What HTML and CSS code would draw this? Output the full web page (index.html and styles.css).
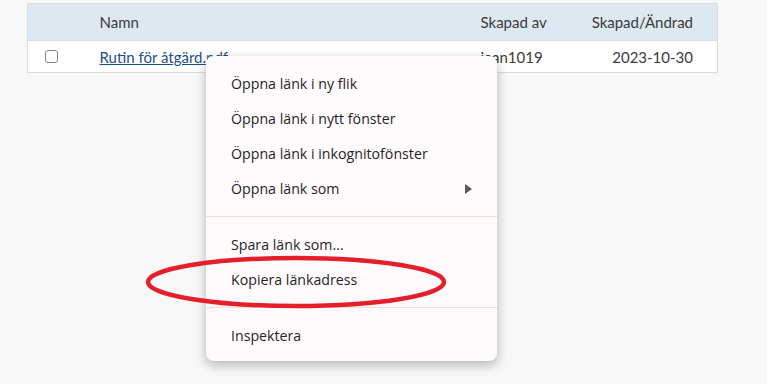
FILE: index.html
```html
<!DOCTYPE html>
<html lang="sv">
<head>
    <meta charset="UTF-8">
    <title>Dokument</title>
    <link rel="stylesheet" href="styles.css">
</head>
<body>
    <div class="page">
        <table class="doc-table">
            <thead>
                <tr>
                    <th class="col-check"></th>
                    <th class="col-name">Namn</th>
                    <th class="col-by">Skapad av</th>
                    <th class="col-date">Skapad/Ändrad</th>
                </tr>
            </thead>
            <tbody>
                <tr>
                    <td class="col-check"><span class="checkbox"></span></td>
                    <td class="col-name"><a href="#">Rutin för åtgärd.pdf</a></td>
                    <td class="col-by">jean1019</td>
                    <td class="col-date">2023-10-30</td>
                </tr>
            </tbody>
        </table>

        <div class="context-menu">
            <div class="menu-group">
                <div class="menu-item">Öppna länk i ny flik</div>
                <div class="menu-item">Öppna länk i nytt fönster</div>
                <div class="menu-item">Öppna länk i inkognitofönster</div>
                <div class="menu-item has-sub">Öppna länk som <span class="arrow"></span></div>
            </div>
            <div class="menu-group">
                <div class="menu-item">Spara länk som...</div>
                <div class="menu-item">Kopiera länkadress</div>
            </div>
            <div class="menu-group">
                <div class="menu-item">Inspektera</div>
            </div>
        </div>

        <svg class="mark" width="306" height="60" viewBox="0 0 306 60">
            <ellipse cx="151" cy="30" rx="148" ry="24" fill="none" stroke="#e41e2b" stroke-width="4.5"/>
        </svg>
    </div>
</body>
</html>
```

FILE: styles.css
```css
* {
    margin: 0;
    padding: 0;
    box-sizing: border-box;
}

body {
    background: #f8f8f8;
    font-family: "Open Sans", sans-serif;
    color: #333;
}

.page {
    position: relative;
    width: 767px;
    height: 384px;
    padding: 3px 49px 0 27px;
}

.doc-table {
    width: 691px;
    border-collapse: collapse;
    background: white;
    border: 1px solid #dcdcdc;
    font-family: "Lato", sans-serif;
    font-size: 15px;
}

.doc-table th {
    background: #dde8f0;
    font-weight: normal;
    height: 37px;
    text-align: left;
    color: #3b3b3b;
}

.doc-table td {
    height: 32px;
    border-top: 1px solid #d8dde2;
    color: #3b3b3b;
}

.col-check {
    width: 72px;
    padding-left: 17px;
}

.col-by {
    width: 107px;
}

.col-date {
    width: 130px;
    text-align: right !important;
    padding-right: 24px;
}

.checkbox {
    display: block;
    width: 13px;
    height: 13px;
    border: 1px solid #858585;
    border-radius: 3px;
    background: white;
}

.doc-table a {
    color: #1b4f8a;
    text-decoration: underline;
}

.context-menu {
    position: absolute;
    left: 206px;
    top: 56px;
    width: 291px;
    background: #fffbfd;
    border-radius: 8px;
    box-shadow: 0 4px 12px rgba(0,0,0,0.28);
    padding: 10px 0 8px;
    font-family: "Open Sans", sans-serif;
    font-size: 14.2px;
    color: #1f1f1f;
}

.menu-group {
    border-bottom: 1px solid #f8dccf;
    padding-bottom: 10px;
    margin-bottom: 10px;
}

.menu-group:last-child {
    border-bottom: none;
    padding-bottom: 0;
    margin-bottom: 0;
}

.menu-item {
    height: 35px;
    line-height: 35px;
    padding-left: 25px;
    position: relative;
}

.arrow {
    position: absolute;
    right: 25px;
    top: 13px;
    border-left: 7px solid #5a5a5a;
    border-top: 5px solid transparent;
    border-bottom: 5px solid transparent;
}

.mark {
    position: absolute;
    left: 145px;
    top: 252px;
}
```
